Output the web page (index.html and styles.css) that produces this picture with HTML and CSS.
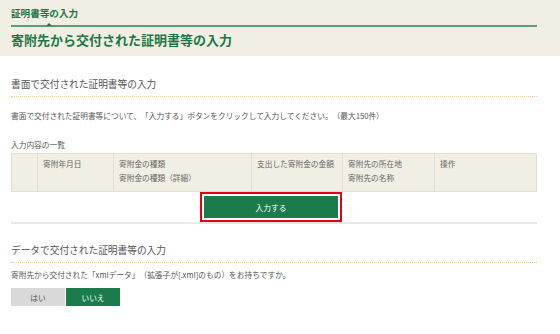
FILE: index.html
```html
<!DOCTYPE html>
<html lang="ja">
<head>
    <meta charset="UTF-8">
    <meta name="viewport" content="width=device-width, initial-scale=1.0">
    <title>証明書等の入力</title>
    <link rel="stylesheet" href="styles.css">
</head>
<body>
    <div class="page-head">
        <div class="crumb"><span class="crumb-item">証明書等の入力</span></div>
        <h1>寄附先から交付された証明書等の入力</h1>
    </div>

    <div class="content">
        <div class="block">
            <h2>書面で交付された証明書等の入力</h2>
            <p class="lead">書面で交付された証明書等について、「入力する」ボタンをクリックして入力してください。（最大150件）</p>

            <p class="caption">入力内容の一覧</p>
            <table class="list">
                <tr>
                    <th class="col-no"></th>
                    <th class="col-date">寄附年月日</th>
                    <th class="col-kind">寄附金の種類<br>寄附金の種類（詳細）</th>
                    <th class="col-amount">支出した寄附金の金額</th>
                    <th class="col-place">寄附先の所在地<br>寄附先の名称</th>
                    <th>操作</th>
                </tr>
            </table>
            <div class="add-row">
                <span class="focus-ring"><button class="btn btn-green btn-add">入力する</button></span>
            </div>
        </div>

        <div class="block">
            <h2>データで交付された証明書等の入力</h2>
            <p class="lead lead-tight">寄附先から交付された「xmlデータ」（拡張子が[.xml]のもの）をお持ちですか。</p>
            <div class="choice">
                <button class="btn btn-grey btn-choice">はい</button>
                <button class="btn btn-green btn-choice">いいえ</button>
            </div>
        </div>
    </div>
</body>
</html>
```

FILE: styles.css
```css
:root {
    --beige: #f1eee3;
    --green: #1b7b4a;
    --title-green: #1d7844;
    --line-green: #55a076;
    --text: #555;
    --dots: #f6c777;
}

* {
    box-sizing: border-box;
}

body {
    margin: 0;
    font-family: "Noto Sans CJK JP", "Noto Sans", sans-serif;
    color: var(--text);
    background: #fff;
    text-spacing-trim: space-all;
}

.page-head {
    background: var(--beige);
    padding: 0 23px 7px 11px;
}
.crumb {
    padding: 3px 0 5px;
    line-height: 14px;
    border-bottom: 2px solid var(--line-green);
}
.crumb-item {
    position: relative;
    font-size: 9.6px;
    font-weight: bold;
    color: var(--title-green);
}
.crumb-item::after {
    content: "";
    position: absolute;
    left: 35px;
    bottom: -6px;
    border-left: 3px solid transparent;
    border-right: 3px solid transparent;
    border-bottom: 3px solid var(--title-green);
}
h1 {
    margin: 4px 0 0;
    font-size: 13px;
    line-height: 18px;
    font-weight: bold;
    color: var(--title-green);
}

.content {
    width: 526px;
    margin-left: 11px;
}
.block {
    padding-top: 21px;
}
.block + .block {
    padding-top: 19px;
}
h2 {
    margin: 0;
    padding-bottom: 5px;
    font-size: 9.7px;
    line-height: 14px;
    font-weight: normal;
    color: var(--text);
    border-bottom: 1px dotted var(--dots);
}
.lead {
    margin: 13px 0 0;
    font-size: 7.7px;
    line-height: 12px;
}
.lead-tight {
    margin-top: 6px;
}
.caption {
    margin: 17px 0 2px;
    font-size: 7.7px;
    line-height: 12px;
}

.list {
    width: 100%;
    border-collapse: collapse;
    background: var(--beige);
}
.list th {
    padding: 3px 5px 6px;
    font-size: 7.7px;
    line-height: 14px;
    font-weight: normal;
    text-align: left;
    vertical-align: top;
    color: #666;
    border: 1px solid #e2dfd3;
}
.list .col-no { width: 26px; }
.list .col-date { width: 76px; }
.list .col-kind { width: 138px; }
.list .col-amount { width: 91px; }
.list .col-place { width: 92px; }

.add-row {
    display: flex;
    justify-content: center;
    padding: 0 6px 0 0;
    border-bottom: 2px solid #e8e8e8;
}
.focus-ring {
    display: flex;
    padding: 2px;
    border: 2px solid #e60012;
}

.btn {
    border: 0;
    padding: 0;
    font-family: inherit;
    font-size: 7.7px;
    cursor: pointer;
}
.btn-green {
    background: var(--green);
    color: #fff;
}
.btn-grey {
    background: #d9d9d9;
    color: #555;
}
.btn-add {
    width: 134px;
    height: 22px;
}

.choice {
    display: flex;
    gap: 1px;
    margin-top: 7px;
}
.btn-choice {
    width: 54px;
    height: 18px;
}
```
